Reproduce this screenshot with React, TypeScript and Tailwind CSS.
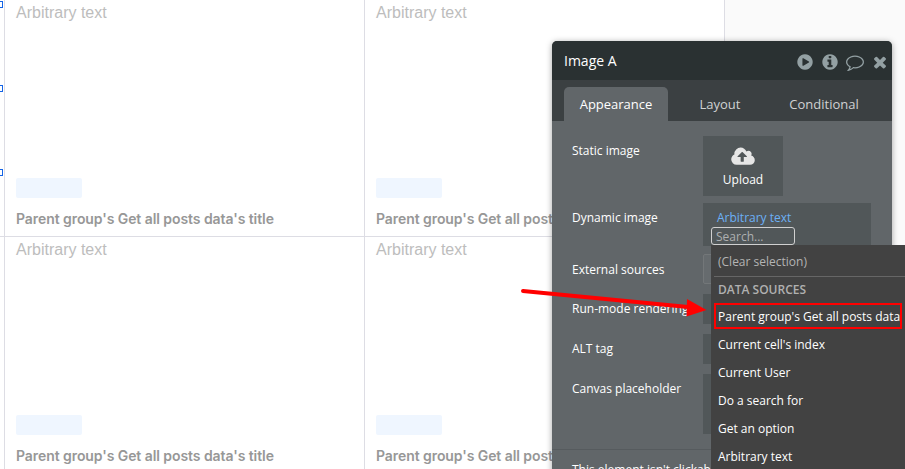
import React from "react";

const PLAY =
  "M896 128q209 0 385.500 103t279.500 279.500 103 385.500-103 385.500-279.500 279.500-385.500 103-385.500-103-279.500-279.500-103-385.500 103-385.500 279.500-279.500 385.500-103zm384 823q32-18 32-55t-32-55l-544-320q-31-19-64-1-32 19-32 56v640q0 37 32 56 16 8 32 8 17 0 32-9z";
const INFO =
  "M1152 1376v-160q0-14-9-23t-23-9h-96v-512q0-14-9-23t-23-9h-320q-14 0-23 9t-9 23v160q0 14 9 23t23 9h96v320h-96q-14 0-23 9t-9 23v160q0 14 9 23t23 9h448q14 0 23-9t9-23zm-128-896v-160q0-14-9-23t-23-9h-192q-14 0-23 9t-9 23v160q0 14 9 23t23 9h192q14 0 23-9t9-23zm640 416q0 209-103 385.500t-279.500 279.500-385.500 103-385.500-103-279.500-279.500-103-385.500 103-385.500 279.500-279.500 385.500-103 385.500 103 279.500 279.500 103 385.500z";
const COMMENT =
  "M896 384q-204 0-381.500 69.500t-282 187.500-104.500 255q0 112 71.500 213.500t201.500 175.500l87 50-27 96q-24 91-70 172 152-63 275-171l43-38 57 6q69 8 130 8 204 0 381.500-69.500t282-187.500 104.500-255-104.500-255-282-187.500-381.500-69.500zm896 512q0 174-120 321.500t-326 233-450 85.500q-70 0-145-8-198 175-460 242-49 14-114 22h-5q-15 0-27-10.500t-16-27.500v-1q-3-4-.5-12t2-10 4.500-9.500l6-9 7-8.500 8-9q7-8 31-34.500t34.500-38 31-39.500 32.500-51 27-59 26-76q-157-89-247.500-220t-90.500-281q0-174 120-321.500t326-233 450-85.500 450 85.500 326 233 120 321.500z";
const TIMES =
  "M1490 1322q0 40-28 68l-136 136q-28 28-68 28t-68-28l-294-294-294 294q-28 28-68 28t-68-28l-136-136q-28-28-28-68t28-68l294-294-294-294q-28-28-28-68t28-68l136-136q28-28 68-28t68 28l294 294 294-294q28-28 68-28t68 28l136 136q28 28 28 68t-28 68l-294 294 294 294q28 28 28 68z";
const CLOUD =
  "M1280 864q0-14-9-23l-352-352q-9-9-23-9t-23 9l-351 351q-10 12-10 24 0 14 9 23t23 9h224v352q0 13 9.500 22.500t22.500 9.500h192q13 0 22.500-9.500t9.500-22.500v-352h224q13 0 22.500-9.500t9.500-22.500zm640 288q0 159-112.500 271.500t-271.500 112.500h-1088q-185 0-316.500-131.500t-131.500-316.500q0-130 70-240t188-165q-2-30-2-43 0-212 150-362t362-150q156 0 285.500 87t188.500 231q71-62 166-62 106 0 181 75t75 181q0 76-41 138 130 31 213.500 135.500t83.500 238.500z";

function HeaderIcon({ d }: { d: string }) {
  return (
    <svg viewBox="0 0 1792 1792" className="h-[18px] w-[18px] shrink-0 fill-[#93a0a3]">
      <path d={d} />
    </svg>
  );
}

function Cell() {
  return (
    <div className="flex h-[237px] w-[360px] shrink-0 flex-col border-r border-b border-[#dddde4] pl-[11px]">
      <div className="mt-[3px] h-[20px] font-['Liberation_Sans',sans-serif] text-[16px] leading-[20px] text-[#bdbdbd]">
        Arbitrary text
      </div>
      <div className="mt-[155px] h-[20px] w-[66px] rounded-[2px] bg-[#eff6ff]" />
      <div className="mt-[11px] font-['Inter',sans-serif] text-[14px] leading-[20px] font-semibold tracking-[-0.07px] whitespace-nowrap text-[#979797]">
        Parent group's Get all posts data's title
      </div>
    </div>
  );
}

function Row({ label, height, children }: { label: string; height: string; children?: React.ReactNode }) {
  return (
    <div className={"flex " + height}>
      <div className="w-[131px] shrink-0 pt-[6px] leading-[18px] whitespace-nowrap">{label}</div>
      {children}
    </div>
  );
}

const sources = ["Current cell's index", "Current User", "Do a search for", "Get an option", "Arbitrary text"];

export default function App() {
  return (
    <div className="relative h-[469px] w-[905px] overflow-hidden bg-[#fafafa] font-['Open_Sans',sans-serif] text-[12px] text-white">
      <div className="flex h-[469px] w-[725px] bg-white">
        <div className="h-full w-[5px] shrink-0 border-r border-[#dddde4]">
          <div className="box-content h-[236px] border-b border-[#dddde4]" />
        </div>
        <div className="flex w-[720px] flex-wrap content-start">
          <Cell />
          <Cell />
          <Cell />
          <Cell />
        </div>
      </div>

      {/* selection handles on the canvas element */}
      <div className="absolute top-[1px] left-[-4px] h-[7px] w-[7px] border border-[#1464e6] bg-white" />
      <div className="absolute top-[85px] left-[-4px] h-[7px] w-[7px] border border-[#1464e6] bg-white" />
      <div className="absolute top-[169px] left-[-4px] h-[7px] w-[7px] border border-[#1464e6] bg-white" />

      {/* property editor */}
      <div className="absolute top-[41px] left-[552px] h-[460px] w-[340px] overflow-hidden rounded-[5px] bg-[#616669] shadow-[0_1px_6px_rgba(0,0,0,0.35)]">
        <div className="flex h-[39px] items-center bg-[#2a3132] pr-[3.5px] pl-[12px]">
          <div className="flex-1 text-[14px] leading-[20px]">Image A</div>
          <div className="flex items-center pt-[2px]">
            <HeaderIcon d={PLAY} />
            <div className="w-[7px]" />
            <HeaderIcon d={INFO} />
            <div className="w-[7px]" />
            <HeaderIcon d={COMMENT} />
            <div className="w-[7px]" />
            <HeaderIcon d={TIMES} />
          </div>
        </div>
        <div className="flex h-[41px] items-end bg-[#3b4042] pl-[12px] text-[13px] text-[#d0d2d3]">
          <div className="flex h-[34px] w-[104px] items-center justify-center rounded-t-[5px] bg-[#616669] pt-[2px] text-white">
            Appearance
          </div>
          <div className="flex h-[34px] w-[104px] items-center justify-center pt-[2px]">Layout</div>
          <div className="flex h-[34px] w-[104px] items-center justify-center pt-[2px]">Conditional</div>
        </div>
        <div className="flex flex-col pt-[15px] pl-[20px]">
          <Row label="Static image" height="h-[67px]">
            <div className="flex h-[60px] w-[80px] flex-col items-center bg-[#515759] pt-[10px]">
              <svg viewBox="0 0 1920 1792" className="h-[22px] w-[24px] fill-[#e6e6e6]">
                <path d={CLOUD} />
              </svg>
              <div className="mt-[3px] text-[12px] leading-[18px]">Upload</div>
            </div>
          </Row>
          <Row label="Dynamic image" height="h-[51px]">
            <div className="h-[43px] w-[168px] bg-[#515759] pt-[6px] pl-[14px] leading-[18px] text-[#6cb0f6]">
              Arbitrary text
            </div>
          </Row>
          <div className="flex h-[40px]">
            <div className="w-[131px] shrink-0 pt-[7px] leading-[18px]">External sources</div>
            <div className="h-[30px] w-[168px] rounded-[2px] border border-[#737779] bg-[#666b6e]" />
          </div>
          <Row label="Run-mode rendering" height="h-[40px]">
            <div className="h-[30px] w-[168px] bg-[#515759]" />
          </Row>
          <Row label="ALT tag" height="h-[40px]">
            <div className="h-[30px] w-[168px] bg-[#515759]" />
          </Row>
          <Row label="Canvas placeholder" height="h-[75px]">
            <div className="h-[60px] w-[168px] bg-[#515759]" />
          </Row>
        </div>
        <div className="border-t border-[#565b5e] pt-[11px] pl-[20px] leading-[18px]">This element isn't clickable</div>
      </div>

      {/* expression search and its menu */}
      <div className="absolute top-[227px] left-[711px] w-[220px]">
        <div className="h-[18px] w-[84px] rounded-[3px] border border-[#d0d0d0] bg-[#515759] pl-[4px] leading-[17px] text-[#aeb0b1]">
          Search...
        </div>
        <div className="h-[240px] bg-[#424242] pl-[3px]">
          <div className="flex h-[32px] items-center border-b border-[#666666] pt-[2px] pl-[4px] text-[#b4b4b4]">
            (Clear selection)
          </div>
          <div className="flex h-[26px] items-center pl-[4px] font-semibold text-[#b0b0b0]">DATA SOURCES</div>
          <div className="mb-[1px] flex h-[26px] w-[188px] items-center border-2 border-[#ff0000] pt-[1px] pl-[2px] whitespace-nowrap">
            Parent group's Get all posts data
          </div>
          {sources.map((s) => (
            <div key={s} className="flex h-[28px] items-center pt-[2px] pl-[4px]">
              {s}
            </div>
          ))}
        </div>
      </div>

      {/* annotation arrow */}
      <svg viewBox="0 0 905 469" className="pointer-events-none absolute inset-0 h-[469px] w-[905px]">
        <path d="M523 291L688 307" stroke="#ff0000" strokeWidth="4" strokeLinecap="round" />
        <path d="M687 299L706.500 310L686.500 316.500Z" fill="#ff0000" />
      </svg>
    </div>
  );
}
